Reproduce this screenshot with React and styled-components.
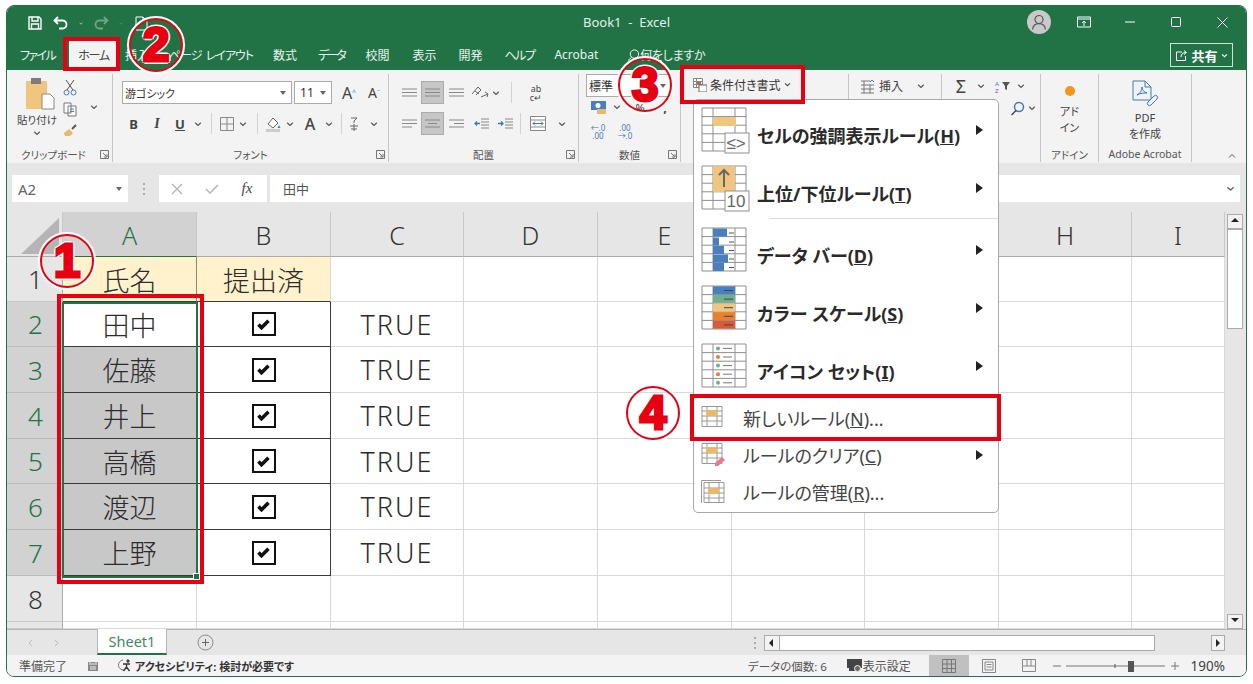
import React from "react";
import styled, { createGlobalStyle } from "styled-components";

const FONT = `"Noto Sans", "Noto Sans CJK JP", "Liberation Sans", sans-serif`;
const GREEN = "#217346";
const RED = "#e60012";

const Global = createGlobalStyle`
  html, body { margin: 0; padding: 0; background: #fff; }
  body { font-family: ${FONT}; }
`;

const Page = styled.div`
  position: relative;
  width: 1253px;
  height: 684px;
  overflow: hidden;
  background: #fff;
  padding: 5px 6px 0;
  box-sizing: border-box;
`;
const Win = styled.div`
  width: 1241px;
  height: 672px;
  box-sizing: border-box;
  border: 1px solid ${GREEN};
  border-radius: 8px;
  overflow: hidden;
  display: flex;
  flex-direction: column;
  background: #f3f3f3;
`;

/* title */
const TitleBar = styled.div`
  height: 32px;
  background: ${GREEN};
  display: grid;
  grid-template-columns: 1fr auto 1fr;
  align-items: center;
  color: #fff;
  font-size: 13px;
`;
const Qat = styled.div`
  display: flex;
  align-items: center;
  padding: 2px 0 0 20px;
`;
const QatBtn = styled.span`
  width: ${(p) => p.$w}px;
  display: flex;
  justify-content: center;
  align-items: center;
  opacity: ${(p) => (p.$dim ? 0.35 : 1)};
`;
const Title = styled.div`
  white-space: pre;
  font-size: 13px;
  color: #e6f0ea;
`;
const WinCtl = styled.div`
  display: flex;
  justify-content: flex-end;
  align-items: center;
  padding-right: 1px;
`;
const Avatar = styled.span`
  width: 24px;
  height: 24px;
  border-radius: 50%;
  background: #c9c9c9;
  display: flex;
  align-items: center;
  justify-content: center;
  margin-right: 10px;
`;
const CtlBtn = styled.span`
  width: 46px;
  display: flex;
  justify-content: center;
`;

/* tabs */
const TabBar = styled.div`
  height: 32px;
  background: ${GREEN};
  display: flex;
  align-items: flex-end;
  padding-left: 2px;
  color: #eaf3ee;
  font-size: 12px;
`;
const Tab = styled.div`
  height: 31px;
  padding: ${(p) => p.$pad || "0 11px"};
  display: flex;
  align-items: center;
  white-space: nowrap;
  font-feature-settings: "palt";
  letter-spacing: ${(p) => p.$ls || 0}px;
  ${(p) => p.$on && `background:#f3f3f3;color:#444;`}
`;
const ShareBtn = styled.div`
  margin: 0 13px 3px auto;
  width: 63px;
  height: 24px;
  box-sizing: border-box;
  border: 1px solid #cfe0d6;
  display: flex;
  align-items: center;
  justify-content: center;
  gap: 3px;
  font-size: 13px;
  font-weight: 700;
  color: #fff;
`;

/* ribbon */
const Ribbon = styled.div`
  height: 93px;
  box-sizing: border-box;
  padding: 4px 0 1px;
  display: flex;
  background: #f3f3f3;
  color: #444;
  font-size: 11px;
`;
const Group = styled.div`
  width: ${(p) => p.$w}px;
  flex: none;
  box-sizing: border-box;
  border-right: 1px solid #c6c6c6;
  display: flex;
  flex-direction: column;
`;
const GroupBody = styled.div`
  height: 73px;
  box-sizing: border-box;
  padding: ${(p) => p.$pad || "0"};
  display: flex;
  flex-direction: ${(p) => p.$dir || "column"};
  gap: ${(p) => p.$gap || 0}px;
`;
const LabelRow = styled.div`
  height: 14px;
  display: flex;
  align-items: center;
  font-size: 10.5px;
  color: #555;
  font-feature-settings: "palt";
  white-space: nowrap;
`;
const GroupLabel = styled.span`
  flex: 1;
  text-align: center;
  padding-left: ${(p) => p.$pl ?? 12}px;
`;
const LauncherBox = styled.span`
  width: 12px;
  flex: none;
  display: flex;
`;
const CollapseBox = styled.span`
  width: 10px;
  flex: none;
  display: flex;
  align-self: flex-end;
  margin-right: 9px;
  padding-bottom: 2px;
`;
const Row = styled.div`
  display: flex;
  align-items: center;
  height: ${(p) => p.$h || 23}px;
  margin: ${(p) => p.$m || "0"};
`;
const Btn = styled.span`
  width: ${(p) => p.$w}px;
  height: ${(p) => (p.$fill ? "23px" : "auto")};
  flex: none;
  display: flex;
  align-items: center;
  justify-content: center;
  color: ${(p) => p.$c || "#444"};
  font-size: ${(p) => p.$fs || 12}px;
  line-height: ${(p) => (p.$lh ? `${p.$lh}px` : "normal")};
  text-align: center;
  font-weight: ${(p) => p.$fw || 400};
  font-family: ${(p) => (p.$serif ? `"Liberation Serif", serif` : "inherit")};
  font-style: ${(p) => (p.$it ? "italic" : "normal")};
  text-decoration: ${(p) => (p.$ul ? "underline" : "none")};
  ${(p) => p.$fill && `background:#c6c6c6;outline:1px solid #ababab;outline-offset:-1px;`}
`;
const Sup = styled.sup`
  font-size: 7px;
  color: #4a7fbd;
`;
const VSep = styled.span`
  width: 1px;
  height: 21px;
  background: #d2d2d2;
  margin: 0 ${(p) => p.$mx ?? 6}px;
  flex: none;
`;
const Combo = styled.div`
  width: ${(p) => p.$w}px;
  height: 23px;
  box-sizing: border-box;
  background: #fff;
  border: 1px solid #ababab;
  display: flex;
  align-items: center;
  padding: 0 5px 0 2px;
  justify-content: space-between;
  font-size: ${(p) => p.$fs || 11}px;
  color: #333;
  flex: none;
  margin-right: ${(p) => p.$mr || 0}px;
  font-feature-settings: "palt";
`;
const CaretDown = styled.i`
  width: 0;
  height: 0;
  border: 3px solid transparent;
  border-top: 4px solid #666;
  border-bottom: 0;
`;
const Column = styled.div`
  display: flex;
  flex-direction: column;
  align-items: center;
  width: ${(p) => p.$w}px;
  flex: none;
  padding-top: ${(p) => p.$pt || 0}px;
  line-height: ${(p) => p.$lh || 16}px;
  font-feature-settings: "palt";
  text-align: center;
`;
const PasteLabel = styled.span`
  font-size: 10.5px;
  margin-top: 3px;
  white-space: nowrap;
`;
const PasteChev = styled.span`
  margin-top: 2px;
  display: flex;
`;

/* formula bar */
const FormulaBar = styled.div`
  height: 49px;
  box-sizing: border-box;
  background: #e6e6e6;
  padding: 12px 6px 10px 5px;
  display: flex;
  align-items: stretch;
`;
const NameBox = styled.div`
  width: 116px;
  background: #fff;
  display: flex;
  align-items: center;
  justify-content: space-between;
  padding: 0 6px 0 6px;
  box-sizing: border-box;
  font-size: 15px;
  color: #666;
`;
const Grip = styled.span`
  width: 31px;
  display: flex;
  justify-content: center;
  align-items: center;
  color: #aaa;
`;
const FxBox = styled.div`
  width: 108px;
  background: #fff;
  display: flex;
  align-items: center;
  margin-right: 3px;
`;
const FormulaInput = styled.div`
  flex: 1;
  background: #fff;
  display: flex;
  align-items: center;
  justify-content: space-between;
  padding: 0 5px 0 13px;
  font-size: 13px;
  color: #555;
`;

/* sheet */
const SheetArea = styled.div`
  height: 417px;
  display: flex;
  background: #e6e6e6;
  position: relative;
`;
const GridWrap = styled.div`
  width: 1218px;
  height: 417px;
  display: grid;
  grid-template-columns: 56px 134px 134px 133px 134px 134px 133px 134px 133px 93px;
  grid-template-rows: 45px 45px 45px 46px 46px 45px 46px 46px 46px 7px;
  overflow: hidden;
  background: #fff;
`;
const ColHead = styled.div`
  background: ${(p) => (p.$on ? "#d2d2d2" : "#e6e6e6")};
  color: ${(p) => (p.$on ? GREEN : "#333")};
  border-right: 1px solid #c8c8c8;
  border-bottom: 1px solid ${(p) => (p.$on ? GREEN : "#ababab")};
  box-sizing: border-box;
  display: flex;
  align-items: center;
  justify-content: center;
  font-size: 25px;
  font-weight: 300;
  padding-top: 2px;
`;
const Corner = styled.div`
  background: #e6e6e6;
  border-right: 1px solid #c8c8c8;
  border-bottom: 1px solid #ababab;
  box-sizing: border-box;
  display: flex;
  align-items: flex-end;
  justify-content: flex-end;
  padding: 0 3px 2px 0;
`;
const RowHead = styled.div`
  background: ${(p) => (p.$on ? "#d2d2d2" : "#e6e6e6")};
  color: ${(p) => (p.$on ? GREEN : "#333")};
  border-bottom: 1px solid ${(p) => (p.$on ? "#bbb" : "#c8c8c8")};
  border-right: 1px solid ${(p) => (p.$on ? GREEN : "#ababab")};
  box-sizing: border-box;
  display: flex;
  align-items: center;
  justify-content: center;
  font-size: 26px;
  font-weight: 300;
  padding-left: 2px;
`;
const Cell = styled.div`
  background: ${(p) => p.$bg || "#fff"};
  border-right: 1px solid ${(p) => p.$br || "#d9d9d9"};
  border-bottom: 1px solid ${(p) => p.$bb || "#d9d9d9"};
  box-sizing: border-box;
  display: flex;
  align-items: center;
  justify-content: center;
  font-size: ${(p) => p.$fs || 27}px;
  color: #2b2b2b;
  font-weight: 300;
  letter-spacing: ${(p) => p.$ls || 0}px;
`;
const CheckBox = styled.span`
  width: 24px;
  height: 24px;
  box-sizing: border-box;
  border: 2px solid #111;
  background: #fff;
  display: flex;
  align-items: center;
  justify-content: center;
`;
const Selection = styled.div`
  position: absolute;
  left: 55px;
  top: 90px;
  width: 136px;
  height: 276px;
  box-sizing: border-box;
  border: 2px solid ${GREEN};
  pointer-events: none;
  &::after {
    content: "";
    position: absolute;
    right: -4px;
    bottom: -4px;
    width: 5px;
    height: 5px;
    background: ${GREEN};
    border: 1px solid #fff;
  }
`;
const VScroll = styled.div`
  width: 21px;
  box-sizing: border-box;
  padding: 2px 3px 0 2px;
  display: flex;
  flex-direction: column;
`;
const ScrollBtn = styled.div`
  height: ${(p) => p.$h || 15}px;
  background: #f3f3f3;
  border: 1px solid #ababab;
  box-sizing: border-box;
  display: flex;
  align-items: center;
  justify-content: center;
  flex: none;
  width: ${(p) => (p.$w ? `${p.$w}px` : "auto")};
`;
const VThumb = styled.div`
  height: 100px;
  background: #fff;
  border: 1px solid #ababab;
  box-sizing: border-box;
`;
const Spacer = styled.div`
  flex: 1;
`;

/* sheet bar */
const SheetBar = styled.div`
  height: 26px;
  background: #e6e6e6;
  border-top: 1px solid #b5b5b5;
  box-sizing: border-box;
  display: flex;
  align-items: stretch;
`;
const NavArea = styled.div`
  width: 90px;
  display: flex;
  align-items: center;
  gap: 21px;
  padding-left: 20px;
  box-sizing: border-box;
`;
const SheetTab = styled.div`
  width: 70px;
  background: #fff;
  border-bottom: 2px solid ${GREEN};
  border-right: 1px solid #b5b5b5;
  border-left: 1px solid #b5b5b5;
  margin-top: -1px;
  box-sizing: border-box;
  color: #3d8a62;
  font-size: 14.5px;
  display: flex;
  align-items: center;
  justify-content: center;
`;
const AddArea = styled.div`
  width: 76px;
  display: flex;
  align-items: center;
  justify-content: center;
`;
const DotsArea = styled.div`
  width: 19px;
  margin-left: auto;
  display: flex;
  align-items: center;
  justify-content: center;
`;
const HScroll = styled.div`
  width: 461px;
  display: flex;
  align-items: center;
  margin-right: 21px;
  flex: none;
`;
const HThumb = styled.div`
  width: 375px;
  height: 16px;
  background: #fff;
  border: 1px solid #ababab;
  border-left: 0;
  box-sizing: border-box;
  flex: none;
`;

/* status */
const StatusBar = styled.div`
  flex: 1;
  background: #f3f3f3;
  display: flex;
  align-items: center;
  font-size: 11.5px;
  color: #555;
  font-feature-settings: "palt";
  white-space: nowrap;
`;
const StatusText = styled.span`
  margin-left: ${(p) => p.$ml || 0}px;
  font-weight: ${(p) => (p.$b ? 700 : 400)};
  color: ${(p) => (p.$b ? "#333" : "#555")};
  font-size: ${(p) => p.$fs || 11.5}px;
`;
const StatusIcon = styled.span`
  margin-left: ${(p) => p.$ml || 0}px;
  display: flex;
`;
const ViewBtn = styled.span`
  width: 40px;
  height: 100%;
  display: flex;
  align-items: center;
  justify-content: center;
  margin-left: ${(p) => p.$ml || 0}px;
  background: ${(p) => (p.$on ? "#c0c0c0" : "transparent")};
`;
const ZoomWrap = styled.div`
  width: 126px;
  margin-left: 4px;
  flex: none;
  display: flex;
  align-items: center;
`;
const ZoomPct = styled.span`
  margin-left: auto;
  padding-right: 21px;
  font-size: 13.5px;
  color: #444;
`;

/* menu */
const Menu = styled.div`
  position: absolute;
  left: 693px;
  top: 99px;
  width: 306px;
  height: 414px;
  box-sizing: border-box;
  background: #fff;
  border: 1px solid #a8a8a8;
  border-radius: 5px;
  padding: 7px 0 0 7px;
  color: #222;
`;
const BigItem = styled.div`
  display: flex;
  height: ${(p) => p.$h || 58}px;
  align-items: flex-start;
`;
const BigText = styled.span`
  margin: 18px 0 0 7px;
  font-size: 18px;
  line-height: 22px;
  font-weight: 700;
  font-feature-settings: "palt";
  white-space: nowrap;
  color: #2a2a2a;
  flex: 1;
`;
const Arrow = styled.i`
  width: 0;
  height: 0;
  border: 5px solid transparent;
  border-left: 7px solid #222;
  border-right: 0;
  margin: ${(p) => p.$mt ?? 18}px 15px 0 0;
`;
const MenuSep = styled.div`
  height: 1px;
  background: #dcdcdc;
  margin: 0 0 8px 68px;
`;
const SmallItem = styled.div`
  display: flex;
  height: ${(p) => p.$h || 37}px;
  align-items: center;
`;
const SmallText = styled.span`
  margin-left: 18px;
  font-size: 18px;
  color: #444;
  font-feature-settings: "palt";
  white-space: nowrap;
  flex: 1;
`;
const Under = styled.span`
  text-decoration: underline;
`;
const StyleBtn = styled.div`
  position: absolute;
  left: 684px;
  top: 69px;
  width: 117px;
  height: 31px;
  background: #f3f3f3;
  display: flex;
  align-items: center;
  gap: 3px;
  padding-left: 9px;
  box-sizing: border-box;
  font-size: 12px;
  color: #333;
  font-feature-settings: "palt";
`;

/* annotations */
const RedBox = styled.div`
  position: absolute;
  left: ${(p) => p.$x}px;
  top: ${(p) => p.$y}px;
  width: ${(p) => p.$w}px;
  height: ${(p) => p.$h}px;
  box-sizing: border-box;
  border: 4px solid ${RED};
  pointer-events: none;
`;
const Badge = styled.div`
  position: absolute;
  left: ${(p) => p.$x - 28}px;
  top: ${(p) => p.$y - 28}px;
  width: 56px;
  height: 56px;
  box-sizing: border-box;
  border: 3px solid ${RED};
  outline: 2px solid #fff;
  outline-offset: -1px;
  border-radius: 50%;
  display: flex;
  align-items: center;
  justify-content: center;
  font-family: "Liberation Sans", sans-serif;
  font-weight: 700;
  font-size: 48px;
  line-height: 1;
  color: ${RED};
  -webkit-text-stroke: 3px ${RED};
  text-shadow: 3px 0 0 #fff, -3px 0 0 #fff, 0 3px 0 #fff, 0 -3px 0 #fff, 2px 2px 0 #fff, -2px -2px 0 #fff, 2px -2px 0 #fff, -2px 2px 0 #fff;
`;

/* icons */
const Chev = ({ c = "#555", s = 8 }) => (
  <svg width={s} height={s} viewBox="0 0 8 8"><path d="M1.2 2.8 4 5.4 6.8 2.8" fill="none" stroke={c} strokeWidth="1.2" /></svg>
);
const Launcher = () => (
  <svg width="9" height="9" viewBox="0 0 9 9"><path d="M.5 8.5V.5h8v8zM3 3l4 4M7 4v3H4" fill="none" stroke="#777" strokeWidth="1" /></svg>
);
const AlignIcon = ({ kind }) => {
  const w = [[0, 15], [kind === "center" ? 3 : kind === "right" ? 5 : 0, kind === "center" ? 12 : 15], [0, kind === "left" ? 10 : 15]];
  return (
    <svg width="16" height="10" viewBox="0 0 16 10">
      {w.map(([a, b], i) => <path key={i} d={`M${a} ${1 + i * 3.5}H${b}`} stroke="#888" strokeWidth="1" />)}
    </svg>
  );
};
const SmallGrid = ({ color = "#888" }) => (
  <svg width="14" height="14" viewBox="0 0 14 14"><path d="M.5.5h13v13H.5zM7 .5v13M.5 7h13" fill="none" stroke={color} /></svg>
);
const ViewGrid = () => (
  <svg width="14" height="14" viewBox="0 0 14 14"><path d="M.5.5h13v13H.5zM5 .5v13M9.500.5v13M.5 5h13M.5 9.500h13" fill="none" stroke="#777" /></svg>
);
const TBL = "#8f8f8f";
const tableLines = (
  <path d="M1 1h44v43H1zM1 9.6h44M1 18.2h44M1 26.8h44M1 35.4h44M12 1v43M34 1v43" fill="none" stroke={TBL} strokeWidth="1" />
);
const MenuSvg = ({ children }) => <svg width="49" height="47" viewBox="0 0 49 47">{children}</svg>;
const IconHighlight = () => (
  <MenuSvg>
    {tableLines}
    <rect x="12" y="10" width="23" height="9" fill="#f0c67e" />
    <rect x="24" y="26" width="24" height="20" fill="#fff" stroke={TBL} />
    <text x="25.500" y="42" fontSize="17" fill="#666" fontFamily="Liberation Sans">≤&gt;</text>
  </MenuSvg>
);
const IconTop = () => (
  <MenuSvg>
    {tableLines}
    <rect x="12" y="1" width="22" height="26" fill="#f0c67e" />
    <path d="M23 22V5M18 10l5-5 5 5" fill="none" stroke="#666" strokeWidth="2" />
    <rect x="24" y="26" width="24" height="20" fill="#fff" stroke={TBL} />
    <text x="25.500" y="42" fontSize="17" fill="#666" fontFamily="Liberation Sans">10</text>
  </MenuSvg>
);
const IconBars = () => (
  <MenuSvg>
    {tableLines}
    {[[14, 1], [6, 10], [11, 18.5], [15, 27], [11, 35.5]].map(([w, y], i) => (
      <g key={i}>
        <rect x="12" y={y + 0.5} width={w} height="8" fill="#4a7fbd" />
        <path d={`M28 ${y + 5}h5`} stroke="#555" strokeWidth="1" />
      </g>
    ))}
  </MenuSvg>
);
const IconScale = () => (
  <MenuSvg>
    {tableLines}
    {["#4a7fbd", "#6fae91", "#f0c67e", "#e8812c", "#d9593a"].map((c, i) => (
      <g key={i}>
        <rect x="12" y={1.3 + i * 8.6} width="22" height="8" fill={c} />
        <path d={`M23 ${5.5 + i * 8.6}h9`} stroke="#444" strokeWidth="1" />
      </g>
    ))}
  </MenuSvg>
);
const IconSet = () => (
  <MenuSvg>
    {tableLines}
    {["#6fae91", "#e8812c", "#6fae91", "#e8812c", "#6fae91"].map((c, i) => (
      <g key={i}>
        <circle cx="17" cy={5.4 + i * 8.6} r="2" fill={c} />
        <path d={`M22 ${5.4 + i * 8.6}h9`} stroke="#777" strokeWidth="1" />
      </g>
    ))}
  </MenuSvg>
);
const SmallRule = ({ erase, manage }) => (
  <svg width="24" height="26" viewBox="0 0 24 26">
    {manage && <path d="M.5 24V1.5H20" fill="none" stroke="#999" />}
    <path d={manage ? "M3 3.5h20v20H3zM3 9h20M3 14h20M3 19h20M8 3.5v20M18 3.5v20" : "M1 1.5h20v20H1zM1 6h20M1 11h20M1 16h20M6 1.5v20M16 1.5v20"} fill="none" stroke="#999" />
    <rect x={manage ? 7 : 5} y={manage ? 9 : 5} width="11" height="6" fill="#e8b969" />
    {erase && <path d="M14 21l7-6 3 3-7 6h-3z" fill="#e8788e" />}
  </svg>
);
const Tick = () => (
  <svg width="13" height="11" viewBox="0 0 13 11"><path d="M1.500 5.500l3 3.200L11.500 1.800" fill="none" stroke="#111" strokeWidth="3.600" /></svg>
);
const Triangle = ({ dir }) => {
  const d = { up: "M1 5l4-4 4 4z", down: "M1 1l4 4 4-4z", left: "M6 1L2 5l4 4z", right: "M3 1l4 4-4 4z" }[dir];
  return <svg width="10" height="10" viewBox="0 0 10 10"><path d={d} fill="#222" /></svg>;
};
const Dots = () => (
  <svg width="4" height="14" viewBox="0 0 4 14"><g fill="#aaa"><rect x="1" y="1" width="2" height="2" /><rect x="1" y="6" width="2" height="2" /><rect x="1" y="11" width="2" height="2" /></g></svg>
);

const names = ["氏名", "田中", "佐藤", "井上", "高橋", "渡辺", "上野"];
const cols = ["A", "B", "C", "D", "E", "F", "G", "H", "I"];
const Dark = "#3a3a3a";

function GridBody() {
  const rows = [];
  for (let r = 1; r <= 9; r++) {
    const on = r >= 2 && r <= 7;
    rows.push(<RowHead key={`h${r}`} $on={on}>{r <= 8 ? r : ""}</RowHead>);
    cols.forEach((c, i) => {
      const key = `${c}${r}`;
      if (r === 1 && i < 2) {
        rows.push(<Cell key={key} $bg="#fff2cc" $br={i === 0 ? "#8a8a70" : "#d9d9d9"} $bb={Dark}>{i === 0 ? "氏名" : "提出済"}</Cell>);
      } else if (i === 0 && on) {
        rows.push(<Cell key={key} $bg={r === 2 ? "#fff" : "#c8c8c8"} $br={Dark} $bb={Dark}>{names[r - 1]}</Cell>);
      } else if (i === 1 && on) {
        rows.push(<Cell key={key} $br={Dark} $bb={Dark}><CheckBox><Tick /></CheckBox></Cell>);
      } else if (i === 2 && on) {
        rows.push(<Cell key={key} $ls={2}>TRUE</Cell>);
      } else {
        rows.push(<Cell key={key} />);
      }
    });
  }
  return rows;
}

export default function App() {
  return (
    <>
      <Global />
      <Page>
        <Win>
          <TitleBar>
            <Qat>
              <QatBtn $w={16}>
                <svg width="14" height="14" viewBox="0 0 14 14"><path d="M1 1h10l2 2v10H1zM4 1v4h6V1M3.5 13V8h7v5" fill="none" stroke="#fff" strokeWidth="1.4" /></svg>
              </QatBtn>
              <QatBtn $w={36}>
                <svg width="16" height="14" viewBox="0 0 16 14"><path d="M5 1L1.5 4.5 5 8M2 4.5h7.5a4 4 0 0 1 0 8H6" fill="none" stroke="#fff" strokeWidth="1.8" /></svg>
              </QatBtn>
              <QatBtn $w={4}><Chev c="#fff" s={7} /></QatBtn>
              <QatBtn $w={36} $dim>
                <svg width="16" height="14" viewBox="0 0 16 14"><path d="M11 1l3.5 3.5L11 8M14 4.5H6.500a4 4 0 0 0 0 8H10" fill="none" stroke="#fff" strokeWidth="1.8" /></svg>
              </QatBtn>
              <QatBtn $w={4} $dim><Chev c="#fff" s={7} /></QatBtn>
              <QatBtn $w={36}>
                <svg width="13" height="15" viewBox="0 0 13 15"><path d="M1 1h7l4 4v9H1zM8 1v4h4" fill="none" stroke="#fff" strokeWidth="1" /></svg>
              </QatBtn>
            </Qat>
            <Title>Book1  -  Excel</Title>
            <WinCtl>
              <Avatar>
                <svg width="16" height="16" viewBox="0 0 16 16"><circle cx="8" cy="5.500" r="4" fill="none" stroke="#555" strokeWidth="1.2" /><path d="M1.500 15.500c.6-4 3-5.800 6.500-5.800s5.900 1.800 6.500 5.800" fill="none" stroke="#555" strokeWidth="1.2" /></svg>
              </Avatar>
              <CtlBtn>
                <svg width="14" height="12" viewBox="0 0 14 12"><path d="M.5 1h13v10H.5zM.5 3h13M7 10V5M5 7l2-2 2 2" fill="none" stroke="#fff" /></svg>
              </CtlBtn>
              <CtlBtn>
                <svg width="12" height="12" viewBox="0 0 12 12"><path d="M1 6h10" stroke="#fff" /></svg>
              </CtlBtn>
              <CtlBtn>
                <svg width="10" height="10" viewBox="0 0 10 10"><rect x=".5" y=".5" width="9" height="9" rx="1" fill="none" stroke="#fff" /></svg>
              </CtlBtn>
              <CtlBtn>
                <svg width="11" height="11" viewBox="0 0 11 11"><path d="M.5.5l10 10M10.500.5l-10 10" stroke="#fff" /></svg>
              </CtlBtn>
            </WinCtl>
          </TitleBar>

          <TabBar>
            <Tab $pad="0 14px 0 11px" $ls={-1.6}>ファイル</Tab>
            <Tab $on $pad="0 8px 0 9px" $ls={-1.2}>ホーム</Tab>
            <Tab $pad="0 11px 0 8px">挿入</Tab>
            <Tab $pad="0 10px 0 9px" $ls={-1}>ページ&nbsp;&nbsp;レイアウト</Tab>
            <Tab $pad="0 11px 0 10px">数式</Tab>
            <Tab $pad="0 11px 0 10px" $ls={-2.4}>データ</Tab>
            <Tab $pad="0 12px 0 10px">校閲</Tab>
            <Tab>表示</Tab>
            <Tab>開発</Tab>
            <Tab $ls={-1.5}>ヘルプ</Tab>
            <Tab $pad="0 0 0 9px">Acrobat</Tab>
            <Tab $pad="0 0 0 29px" $ls={-0.3}>
              <svg width="13" height="14" viewBox="0 0 14 14"><circle cx="8" cy="6" r="4.500" fill="none" stroke="#fff" /><path d="M5 9.500L1 13" stroke="#fff" /></svg>
              何をしますか
            </Tab>
            <ShareBtn>
              <svg width="13" height="13" viewBox="0 0 13 13"><path d="M7 3H1.500v8.500h9V7M6 8c0-3 2-4.500 5-4.500M9 1.500l2.500 2L9 5.500" fill="none" stroke="#fff" /></svg>
              共有
              <Chev c="#fff" s={7} />
            </ShareBtn>
          </TabBar>

          <Ribbon>
            <Group $w={106}>
              <GroupBody $dir="row" $pad="3px 0 0 7px">
                <Column $w={46} $lh={14}>
                  <svg width="30" height="33" viewBox="0 0 30 33" style={{ marginLeft: 6 }}>
                    <rect x="1" y="4" width="21" height="28" rx="1" fill="#f0c67e" />
                    <rect x="6" y="1" width="10" height="6" fill="#7c7c7c" />
                    <path d="M17 17h8l4 4v11H17z" fill="#fff" stroke="#888" />
                  </svg>
                  <PasteLabel>貼り付け</PasteLabel>
                  <PasteChev><Chev /></PasteChev>
                </Column>
                <Column $w={20} $pt={2}>
                  <svg width="14" height="17" viewBox="0 0 14 17"><path d="M3 1l7 10M11 1L4 11" stroke="#555" fill="none" /><circle cx="3.500" cy="13.500" r="2.500" fill="none" stroke="#4a7fbd" /><circle cx="10.500" cy="13.500" r="2.500" fill="none" stroke="#4a7fbd" /></svg>
                  <svg width="14" height="15" viewBox="0 0 14 15" style={{ marginTop: 6 }}><path d="M1 1h7v10H1zM5 4h8v10H5z" fill="#fff" stroke="#777" /><path d="M7 7h4M7 9.500h4" stroke="#4a7fbd" /></svg>
                  <svg width="15" height="13" viewBox="0 0 15 13" style={{ marginTop: 7 }}><path d="M1 9l5-4 4 4-3 3H2z" fill="#e8b969" /><path d="M9 5l4-4" stroke="#555" strokeWidth="2" /></svg>
                </Column>
                <Column $w={28} $pt={26}><Chev /></Column>
              </GroupBody>
              <LabelRow><GroupLabel $pl={0}>クリップボード</GroupLabel><LauncherBox><Launcher /></LauncherBox></LabelRow>
            </Group>

            <Group $w={276}>
              <GroupBody $pad="7px 0 0 9px">
                <Row>
                  <Combo $w={170} $mr={2}><span>游ゴシック</span><CaretDown /></Combo>
                  <Combo $w={38} $mr={4} $fs={12}><span>&nbsp;11</span><CaretDown /></Combo>
                  <Btn $w={26} $fs={16}>A<Sup>^</Sup></Btn>
                  <Btn $w={24} $fs={14}>A<Sup>ˇ</Sup></Btn>
                </Row>
                <Row $m="8px 0 0">
                  <Btn $w={23} $fw={700} $fs={13}>B</Btn>
                  <Btn $w={24} $it $serif $fw={700} $fs={14}>I</Btn>
                  <Btn $w={22} $ul $fw={700} $fs={13}>U</Btn>
                  <Btn $w={14}><Chev /></Btn>
                  <VSep $mx={6} />
                  <Btn $w={17}><SmallGrid /></Btn>
                  <Btn $w={16}><Chev /></Btn>
                  <VSep $mx={6} />
                  <Btn $w={19}>
                    <svg width="17" height="16" viewBox="0 0 17 16"><path d="M3 8l5-6 5 5-5 5z" fill="#fff" stroke="#666" /><path d="M14 9l1.500 3h-3z" fill="#4a7fbd" /><rect x="1" y="13" width="14" height="3" fill="#ccc" /></svg>
                  </Btn>
                  <Btn $w={14}><Chev /></Btn>
                  <Btn $w={26} $fs={16} $fw={500}>A</Btn>
                  <Btn $w={12}><Chev /></Btn>
                  <VSep $mx={6} />
                  <Btn $w={12}>
                    <svg width="10" height="15" viewBox="0 0 10 15"><path d="M2 2h6L5 5M5 5v2M1 10h8M5 8v7M2 13h6" fill="none" stroke="#666" /></svg>
                  </Btn>
                  <Btn $w={27}><Chev /></Btn>
                </Row>
              </GroupBody>
              <LabelRow><GroupLabel>フォント</GroupLabel><LauncherBox><Launcher /></LauncherBox></LabelRow>
            </Group>

            <Group $w={190}>
              <GroupBody $pad="7px 0 0 9px">
                <Row>
                  <Btn $w={23}><AlignIcon kind="top" /></Btn>
                  <Btn $w={23} $fill><AlignIcon kind="mid" /></Btn>
                  <Btn $w={25}><AlignIcon kind="bot" /></Btn>
                  <Btn $w={22}>
                    <svg width="18" height="15" viewBox="0 0 18 15"><path d="M1 9l6-7 3 3-5 5M4 6l4 3M10 12l7-3M14 7l3 2-1 3" fill="none" stroke="#666" /></svg>
                  </Btn>
                  <Btn $w={10}><Chev /></Btn>
                  <VSep $mx={10} />
                  <Btn $w={28} $fs={9} $lh={9}>ab<br />c↵</Btn>
                </Row>
                <Row $m="8px 0 0">
                  <Btn $w={23}><AlignIcon kind="left" /></Btn>
                  <Btn $w={23} $fill><AlignIcon kind="center" /></Btn>
                  <Btn $w={25}><AlignIcon kind="right" /></Btn>
                  <Btn $w={24}>
                    <svg width="15" height="12" viewBox="0 0 15 12"><path d="M7 1h8M7 4h8M7 7h8M7 10h8" stroke="#888" /><path d="M6 5.500H1M3 3.500l-2 2 2 2" fill="none" stroke="#3f7ab8" strokeWidth="1.300" /></svg>
                  </Btn>
                  <Btn $w={24}>
                    <svg width="15" height="12" viewBox="0 0 15 12"><path d="M7 1h8M7 4h8M7 7h8M7 10h8" stroke="#888" /><path d="M0 5.500h5M3 3.500l2 2-2 2" fill="none" stroke="#3f7ab8" strokeWidth="1.300" /></svg>
                  </Btn>
                  <VSep $mx={3} />
                  <Btn $w={28}>
                    <svg width="16" height="15" viewBox="0 0 16 15"><path d="M.5.500h15v14H.500zM.500 4h15M.500 11h15" fill="#fff" stroke="#888" /><path d="M3 7.500h10M5 5.500l-2 2 2 2M11 5.500l2 2-2 2" fill="none" stroke="#3f7ab8" /></svg>
                  </Btn>
                  <Btn $w={20}><Chev /></Btn>
                </Row>
              </GroupBody>
              <LabelRow><GroupLabel>配置</GroupLabel><LauncherBox><Launcher /></LauncherBox></LabelRow>
            </Group>

            <Group $w={102}>
              <GroupBody $pad="0 0 0 7px">
                <Combo $w={86} $fs={12}><span>標準</span><CaretDown /></Combo>
                <Row $h={18} $m="1px 0 0">
                  <Btn $w={24}>
                    <svg width="17" height="15" viewBox="0 0 17 15"><rect x="1" y="1" width="15" height="9" fill="#4a7fbd" /><circle cx="8" cy="5.500" r="2.500" fill="#fff" /><rect x="7" y="9" width="9" height="5" fill="#e8b969" /></svg>
                  </Btn>
                  <Btn $w={14}><Chev /></Btn>
                  <Btn $w={32} $fs={11}>%</Btn>
                  <Btn $w={18} $fs={13} $fw={700}>,</Btn>
                </Row>
                <Row $h={24} $m="4px 0 0">
                  <Btn $w={24} $fs={8} $lh={8} $c="#3f7ab8">←.0<br />.00</Btn>
                  <Btn $w={30} $fs={8} $lh={8} $c="#3f7ab8">.00<br />→.0</Btn>
                </Row>
              </GroupBody>
              <LabelRow><GroupLabel>数値</GroupLabel><LauncherBox><Launcher /></LauncherBox></LabelRow>
            </Group>

            <Group $w={168}><GroupBody /></Group>

            <Group $w={93}>
              <GroupBody $pad="3px 0 0 11px">
                <Row $h={18}>
                  <svg width="15" height="15" viewBox="0 0 15 15"><path d="M1 2h9M1 6h13M1 10h13M1 14h13M4 2v12M10 6v8" fill="none" stroke="#777" /><path d="M10 3l2-2 2 2" stroke="#3f7ab8" fill="none" /></svg>
                  <Btn $w={32} $fs={12}>挿入</Btn>
                  <Btn $w={28}><Chev /></Btn>
                </Row>
              </GroupBody>
            </Group>

            <Group $w={99}>
              <GroupBody $pad="3px 0 0 10px">
                <Row $h={18}>
                  <Btn $w={18} $fs={18}>Σ</Btn>
                  <Btn $w={22}><Chev /></Btn>
                  <Btn $w={22}>
                    <svg width="17" height="13" viewBox="0 0 17 13"><text x="0" y="6" fontSize="6" fill="#3f7ab8" fontFamily="Liberation Sans">A</text><text x="0" y="13" fontSize="6" fill="#a14ea1" fontFamily="Liberation Sans">Z</text><path d="M7 2h8l-3 4v4l-2-1V6z" fill="#555" /></svg>
                  </Btn>
                  <Btn $w={14}><Chev /></Btn>
                </Row>
                <Row $h={20} $m="3px 0 0 58px">
                  <svg width="15" height="15" viewBox="0 0 15 15"><circle cx="9" cy="6" r="4.500" fill="none" stroke="#3f7ab8" strokeWidth="1.500" /><path d="M6 9.500L1.500 14" stroke="#444" strokeWidth="1.500" /></svg>
                  <Btn $w={14}><Chev /></Btn>
                </Row>
              </GroupBody>
            </Group>

            <Group $w={58}>
              <GroupBody>
                <Column $w={57} $pt={11} $lh={16}>
                  <svg width="12" height="12" viewBox="0 0 12 12" style={{ marginBottom: 7 }}><circle cx="6" cy="6" r="5" fill="#f7941d" /></svg>
                  <span>アド</span>
                  <span>イン</span>
                </Column>
              </GroupBody>
              <LabelRow><GroupLabel $pl={0}>アドイン</GroupLabel></LabelRow>
            </Group>

            <Group $w={93}>
              <GroupBody>
                <Column $w={92} $pt={6} $lh={16}>
                  <svg width="28" height="27" viewBox="0 0 28 27" style={{ marginBottom: 3 }}><path d="M2 1h12l6 6v13H2zM14 1v6h6" fill="none" stroke="#3f7ab8" /><path d="M6 15c3-1 5-5 5-8 0 3 2 5 5 6-3 0-7 0-10 2z" fill="none" stroke="#3f7ab8" /><path d="M17 22l6-6a2 2 0 0 1 3 3l-6 6a2 2 0 0 1-3-3z" fill="#f3f3f3" stroke="#3f7ab8" /></svg>
                  <span>PDF</span>
                  <span>を作成</span>
                </Column>
              </GroupBody>
              <LabelRow><GroupLabel $pl={0}>Adobe Acrobat</GroupLabel></LabelRow>
            </Group>

            <Spacer />
            <CollapseBox>
              <svg width="10" height="8" viewBox="0 0 8 8"><path d="M1 5.500 4 2.500 7 5.500" fill="none" stroke="#555" /></svg>
            </CollapseBox>
          </Ribbon>

          <FormulaBar>
            <NameBox>A2<CaretDown /></NameBox>
            <Grip><Dots /></Grip>
            <FxBox>
              <Btn $w={36}><svg width="12" height="12" viewBox="0 0 12 12"><path d="M1 1l10 10M11 1L1 11" stroke="#b5b5b5" strokeWidth="1.300" /></svg></Btn>
              <Btn $w={34}><svg width="14" height="12" viewBox="0 0 14 12"><path d="M1 6l4 4 8-8" fill="none" stroke="#b5b5b5" strokeWidth="1.500" /></svg></Btn>
              <Btn $w={36} $it $serif $fs={15}>fx</Btn>
            </FxBox>
            <FormulaInput>田中<Chev c="#666" s={9} /></FormulaInput>
          </FormulaBar>

          <SheetArea>
            <GridWrap>
              <Corner>
                <svg width="38" height="36" viewBox="0 0 38 36"><path d="M38 0v36H0z" fill="#b5b5b5" /></svg>
              </Corner>
              {cols.map((c, i) => <ColHead key={c} $on={i === 0}>{c}</ColHead>)}
              <GridBody />
            </GridWrap>
            <VScroll>
              <ScrollBtn><Triangle dir="up" /></ScrollBtn>
              <VThumb />
              <Spacer />
              <ScrollBtn><Triangle dir="down" /></ScrollBtn>
            </VScroll>
            <Selection />
          </SheetArea>

          <SheetBar>
            <NavArea>
              <svg width="6" height="8" viewBox="0 0 6 8"><path d="M5 1L2 4l3 3" fill="none" stroke="#bbb" /></svg>
              <svg width="6" height="8" viewBox="0 0 6 8"><path d="M1 1l3 3-3 3" fill="none" stroke="#bbb" /></svg>
            </NavArea>
            <SheetTab>Sheet1</SheetTab>
            <AddArea>
              <svg width="17" height="17" viewBox="0 0 17 17"><circle cx="8.500" cy="8.500" r="7.500" fill="none" stroke="#888" /><path d="M8.500 5v7M5 8.500h7" stroke="#666" /></svg>
            </AddArea>
            <DotsArea><Dots /></DotsArea>
            <HScroll>
              <ScrollBtn $w={16} $h={16}><Triangle dir="left" /></ScrollBtn>
              <HThumb />
              <Spacer />
              <ScrollBtn $w={14} $h={16}><Triangle dir="right" /></ScrollBtn>
            </HScroll>
          </SheetBar>

          <StatusBar>
            <StatusText $ml={12} $fs={12}>準備完了</StatusText>
            <StatusIcon $ml={20}>
              <svg width="12" height="13" viewBox="0 0 12 13"><rect x="1" y="3" width="10" height="9" fill="#888" /><path d="M2 5h8M3 1v3M9 1v3M3 8h6M3 10h6" stroke="#eee" /></svg>
            </StatusIcon>
            <StatusIcon $ml={18}>
              <svg width="16" height="15" viewBox="0 0 16 15"><path d="M6 2a5 5 0 1 0 1 10" fill="none" stroke="#777" /><path d="M10 3a1 1 0 1 1 0 .1M6 6h7M9.500 6v3l-3 4M9.500 9l3 4" fill="none" stroke="#333" strokeWidth="1.300" /></svg>
            </StatusIcon>
            <StatusText $ml={2} $b $fs={11}>アクセシビリティ: 検討が必要です</StatusText>
            <StatusText $ml={454} $fs={11.500}>データの個数: 6</StatusText>
            <StatusIcon $ml={19}>
              <svg width="17" height="15" viewBox="0 0 17 15"><path d="M1 1h15v9H10v3H3v-3H1z" fill="#444" /><circle cx="11.500" cy="10.500" r="3" fill="#666" stroke="#f3f3f3" /></svg>
            </StatusIcon>
            <StatusText $fs={12}>表示設定</StatusText>
            <ViewBtn $on $ml={18}><ViewGrid /></ViewBtn>
            <ViewBtn>
              <svg width="14" height="14" viewBox="0 0 14 14"><path d="M.5.500h13v13H.500zM3 3h8v8H3zM4.500 5.500h5M4.500 8h5" fill="none" stroke="#888" /></svg>
            </ViewBtn>
            <ViewBtn>
              <svg width="14" height="13" viewBox="0 0 14 13"><path d="M.5.500h13v12H.500zM.500 7h13M5 .500V7M9 .500V7" fill="none" stroke="#888" /></svg>
            </ViewBtn>
            <ZoomWrap>
              <svg width="126" height="16" viewBox="0 0 126 16">
                <path d="M0 8h8M13 8h99" stroke="#777" />
                <path d="M62 6v4" stroke="#555" />
                <rect x="75" y="3" width="6" height="11" fill="#555" />
                <path d="M126 8h-8M122 4v8" stroke="#777" />
              </svg>
            </ZoomWrap>
            <ZoomPct>190%</ZoomPct>
          </StatusBar>
        </Win>

        <StyleBtn>
          <svg width="14" height="14" viewBox="0 0 14 14"><path d="M.5.500h9v9h-9zM.500 3.500h9M.500 6.500h9M3.500.500v9" fill="#fff" stroke="#888" /><rect x="4" y="4" width="4" height="2" fill="#d9593a" /><rect x="6" y="7" width="8" height="7" fill="#fff" stroke="#666" /></svg>
          条件付き書式
          <Chev c="#444" s={7} />
        </StyleBtn>

        <Menu>
          <BigItem><IconHighlight /><BigText>セルの強調表示ルール(<Under>H</Under>)</BigText><Arrow /></BigItem>
          <BigItem $h={53}><IconTop /><BigText>上位/下位ルール(<Under>T</Under>)</BigText><Arrow /></BigItem>
          <MenuSep />
          <BigItem><IconBars /><BigText>データ バー(<Under>D</Under>)</BigText><Arrow /></BigItem>
          <BigItem><IconScale /><BigText>カラー スケール(<Under>S</Under>)</BigText><Arrow /></BigItem>
          <BigItem $h={56}><IconSet /><BigText>アイコン セット(<Under>I</Under>)</BigText><Arrow /></BigItem>
          <SmallItem><SmallRule /><SmallText>新しいルール(<Under>N</Under>)...</SmallText></SmallItem>
          <SmallItem><SmallRule erase /><SmallText>ルールのクリア(<Under>C</Under>)</SmallText><Arrow $mt={0} /></SmallItem>
          <SmallItem><SmallRule manage /><SmallText>ルールの管理(<Under>R</Under>)...</SmallText></SmallItem>
        </Menu>

        <RedBox $x={63} $y={37} $w={57} $h={34} />
        <RedBox $x={680} $y={65} $w={125} $h={39} />
        <RedBox $x={690} $y={394} $w={311} $h={47} />
        <RedBox $x={57} $y={294} $w={147} $h={290} />
        <Badge $x={67} $y={261}>1</Badge>
        <Badge $x={156} $y={45}>2</Badge>
        <Badge $x={645} $y={85}>3</Badge>
        <Badge $x={653} $y={413}>4</Badge>
      </Page>
    </>
  );
}
